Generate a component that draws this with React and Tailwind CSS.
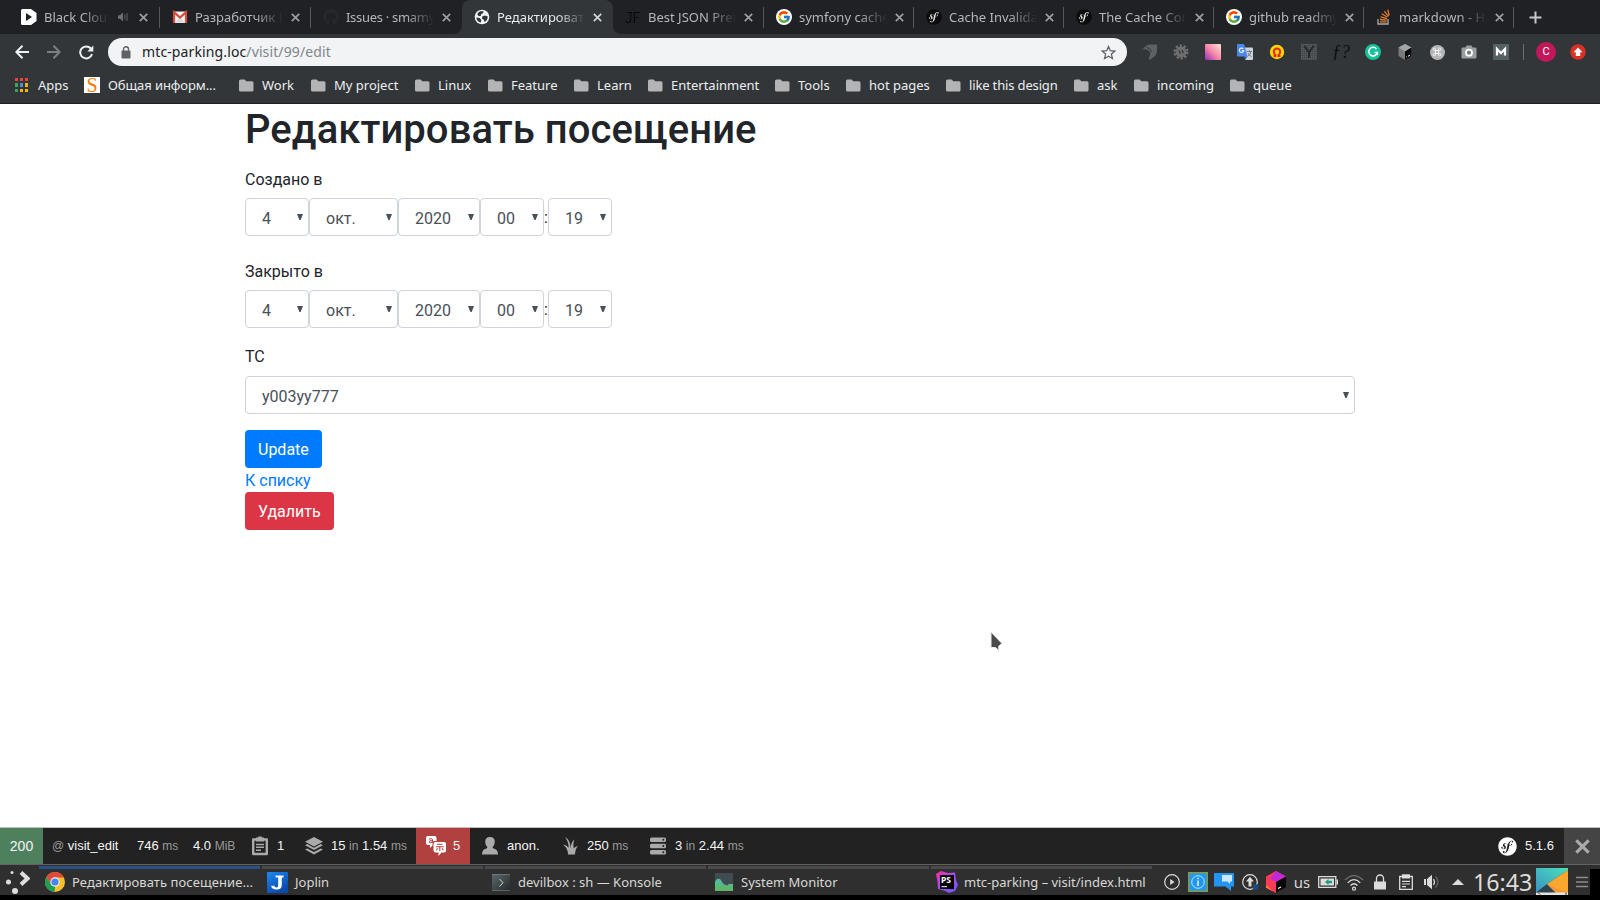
import React from "react";
import { FaGithub, FaSymfony } from "react-icons/fa";
import { FcGoogle } from "react-icons/fc";

/* ---------- shared pieces ---------- */

const Folder = () => (
  <svg width="15" height="13" viewBox="0 0 15 13" className="shrink-0">
    <path d="M1.5 0.5H5.6L7.3 2.3H13Q14.5 2.3 14.5 3.8V11Q14.5 12.5 13 12.5H1.5Q0 12.5 0 11V2Q0 .5 1.5 .5Z" fill="#b3b4b6" />
  </svg>
);

const Cross = ({ size = 9, color = "#9c9ea1", width = 1.7 }) => (
  <svg width={size} height={size} viewBox="0 0 9 9" className="shrink-0">
    <path d="M.8 .8L8.2 8.2M8.2 .8L.8 8.2" stroke={color} strokeWidth={width} fill="none" />
  </svg>
);

const SymfonyBlack = () => (
  <span className="block size-4 rounded-full bg-[radial-gradient(closest-side,#e4e4e4_80%,transparent_82%)]">
    <FaSymfony size={16} color="#0c0c0d" />
  </span>
);

const GoogleRound = () => (
  <span className="flex size-4 items-center justify-center rounded-full bg-white">
    <FcGoogle size={14} />
  </span>
);

const BlackCloud = () => (
  <svg width="16" height="16" viewBox="0 0 16 16">
    <path d="M1.5 0H10L15.5 4V12L10 16H1.5Q0 16 0 14.5V1.5Q0 0 1.5 0Z" fill="#fff" />
    <path d="M5 4L11 8L5 12Z" fill="#202124" />
  </svg>
);

const Gmail = () => (
  <svg width="16" height="16" viewBox="0 0 16 16">
    <path d="M1 2.5H15V14H1Z" fill="#f1f1f1" />
    <path d="M3 13.8L8 8.5L13 13.8Z" fill="#dcdcdc" />
    <path d="M2 14V3.2L8 8.6L14 3.2V14" fill="none" stroke="#d54b3d" strokeWidth="2.2" />
  </svg>
);

const Globe = () => (
  <svg width="16" height="16" viewBox="0 0 16 16">
    <circle cx="8" cy="8" r="7.3" fill="#f1f3f4" />
    <path d="M6.2 2.3L9.6 2.2L9 4.2L7.2 5L7 6.8L4.8 7.3L3.2 5.2Q4 3.2 6.2 2.3Z" fill="#323639" />
    <path d="M2.3 8.4L5.6 9L7.4 11L6.8 13.6Q3 12.8 2.3 8.4Z" fill="#323639" />
    <path d="M8.2 7.6L10.8 6.6L13.8 7.5Q13.6 11.5 10.6 13L9.8 10.8L8 9.8Z" fill="#323639" />
  </svg>
);

const JsonFormatter = () => (
  <svg width="18" height="16" viewBox="0 0 18 16">
    <path d="M2 3H8M6.5 3V11.5Q6.5 14.5 3.5 14.5Q1.5 14.5 1 12M10.5 14.5V3H17M10.5 8.5H15.5" fill="none" stroke="#08080a" strokeWidth="1.2" />
  </svg>
);

const StackOverflow = () => (
  <svg width="14" height="16" viewBox="0 0 14 16">
    <path d="M1 10V15H11V10" fill="none" stroke="#a8a9ab" strokeWidth="1.3" />
    <path d="M3 12.8H9.6M3 10.5L9.6 11.2M3.5 7.8L9.8 9.7M4.8 4.8L10.4 8.2M7.4 2.2L11.4 7.4M10.8 .6L12.2 6.5" stroke="#e07b28" strokeWidth="1.3" fill="none" />
  </svg>
);

const Speaker = () => (
  <svg width="11" height="10" viewBox="0 0 11 10" className="shrink-0">
    <path d="M0 3.2H2L5 .5V9.5L2 6.8H0Z" fill="#6d6f73" />
    <path d="M6.8 2.5V7.5M9 1V9" stroke="#55575b" strokeWidth="1.2" />
  </svg>
);

/* ---------- tab strip ---------- */

const tabs = [
  { icon: <BlackCloud />, title: "Black Cloud", audio: true },
  { icon: <Gmail />, title: "Разработчик P" },
  { icon: <FaGithub size={16} color="#25292e" />, title: "Issues · smamy", tight: true },
  { icon: <Globe />, title: "Редактироват", active: true },
  { icon: <JsonFormatter />, title: "Best JSON Pret" },
  { icon: <GoogleRound />, title: "symfony cache" },
  { icon: <SymfonyBlack />, title: "Cache Invalida" },
  { icon: <SymfonyBlack />, title: "The Cache Con" },
  { icon: <GoogleRound />, title: "github readmy" },
  { icon: <StackOverflow />, title: "markdown - Ho" },
];

function Tab({ tab, wide, beforeActive }) {
  const { icon, title, active, audio, tight } = tab;
  return (
    <div
      className={
        "relative flex h-[34px] shrink-0 items-center pl-[11.5px] " +
        (wide ? "w-[151px] " : "w-[150px] ") +
        (active ? "rounded-t-lg bg-[#323639]" : "")
      }
    >
      {active && (
        <>
          <svg className="absolute bottom-0 -left-2" width="8" height="8">
            <path d="M8 0V8H0A8 8 0 0 0 8 0Z" fill="#323639" />
          </svg>
          <svg className="absolute -right-2 bottom-0" width="8" height="8">
            <path d="M0 0V8H8A8 8 0 0 1 0 0Z" fill="#323639" />
          </svg>
        </>
      )}
      <span className="flex w-4 shrink-0 justify-center">{icon}</span>
      <span
        className={
          "ml-[7.5px] shrink-0 overflow-hidden text-[13px] leading-[18px] whitespace-nowrap " +
          (audio
            ? "w-[65px] mask-[linear-gradient(to_right,black_60%,transparent)] "
            : "w-[88px] mask-[linear-gradient(to_right,black_68%,transparent)] ") +
          (tight ? "tracking-[-0.3px] " : "") +
          (active ? "text-[#e8eaed]" : "text-[#b4b7bb]")
        }
      >
        {title}
      </span>
      {audio && (
        <span className="ml-[9px] flex w-[14px]">
          <Speaker />
        </span>
      )}
      <span className={audio ? "ml-[7px]" : "ml-[7.5px]"}>
        <Cross color={active ? "#d2d4d6" : "#9c9ea1"} />
      </span>
      {!active && !beforeActive && <span className="ml-auto h-[21px] w-px bg-[#55575b]" />}
    </div>
  );
}

function TabStrip() {
  return (
    <div className="flex h-[34px] items-center bg-[#202124] pl-[9px]">
      {tabs.map((t, i) => (
        <Tab key={t.title + i} tab={t} wide={i < 5} beforeActive={tabs[i + 1]?.active} />
      ))}
      <svg width="13" height="13" viewBox="0 0 13 13" className="ml-[15px]">
        <path d="M6.5 .5V12.5M.5 6.5H12.5" stroke="#c6c8ca" strokeWidth="2" />
      </svg>
    </div>
  );
}

/* ---------- address bar ---------- */

const extensions = [
  <svg width="16" height="16" viewBox="0 0 16 16">
    <path d="M0 5.500L2.500 4.500Q5 .5 10 .5H16V7Q15.500 13 8 16Q7.500 14 9 11.500Q9.800 9 8.500 7.500Q7.300 5.800 5 5.500Q3 5 0 5.500Z" fill="#5d6164" />
    <path d="M5.500 3.300Q9.500 4 10.500 8" fill="none" stroke="#323639" strokeWidth="1" />
  </svg>,
  <svg width="16" height="16" viewBox="0 0 16 16">
    <circle cx="8" cy="8" r="6.300" fill="none" stroke="#6f6f6f" strokeWidth="2.600" strokeDasharray="2.200 1.750" />
    <circle cx="8" cy="8" r="5.400" fill="#6f6f6f" />
    <path d="M6 6.500L7.300 9.500M9 6L10.300 9" stroke="#34383b" strokeWidth="1.500" />
  </svg>,
  <svg width="16" height="16" viewBox="0 0 16 16">
    <defs>
      <linearGradient id="pinkGrad" x1="0" y1="1" x2="1" y2="0">
        <stop offset="0" stopColor="#8b2fc0" />
        <stop offset=".45" stopColor="#f482a8" />
        <stop offset="1" stopColor="#fde9cf" />
      </linearGradient>
    </defs>
    <rect width="16" height="16" rx="1" fill="url(#pinkGrad)" />
  </svg>,
  <svg width="16" height="16" viewBox="0 0 16 16">
    <path d="M6 3.500H15Q16 3.500 16 4.500V15Q16 16 15 16H8.500Z" fill="#cfd3d8" />
    <path d="M1 0H7L10.600 12.500H1Q0 12.500 0 11.500V1Q0 0 1 0Z" fill="#4a88ee" />
    <path d="M7.300 12.500H10.600L8.200 15.800Z" fill="#2f62c8" />
    <path d="M6.300 4.800A2.200 2.200 0 1 0 6.800 6.700H4.800" fill="none" stroke="#fff" strokeWidth="1.100" />
    <path d="M9.800 7.500H15M12.300 6.300V7.500M14 7.500Q13 11 10.800 12.400M11 9Q12 11.500 14.500 12.600" fill="none" stroke="#6b7985" strokeWidth="1" />
  </svg>,
  <svg width="16" height="16" viewBox="0 0 16 16">
    <circle cx="8" cy="8" r="7.200" fill="#ffd500" />
    <path d="M4.500 12H6.500V11Q4.800 9.800 4.800 7.700A3.200 3.200 0 0 1 11.200 7.700Q11.200 9.800 9.500 11V12H11.500" fill="none" stroke="#e8261c" strokeWidth="2" />
  </svg>,
  <svg width="16" height="16" viewBox="0 0 16 16">
    <defs>
      <pattern id="hatch" width="2" height="2" patternUnits="userSpaceOnUse">
        <rect width="2" height="2" fill="#484b4d" />
        <rect width="1" height="1" fill="#5d6062" />
      </pattern>
    </defs>
    <rect width="16" height="16" fill="url(#hatch)" />
    <path d="M3.500 2L8 8.500L12.500 2M8 8V14" fill="none" stroke="#25282b" strokeWidth="2" />
  </svg>,
  <span className="font-['Liberation_Serif',serif] text-[18px] leading-4 text-[#0b0c0d] italic">ƒ?</span>,
  <span className="flex size-4 items-center justify-center rounded-full bg-[#15c39a]">
    <svg width="12" height="12" viewBox="0 0 12 12">
      <path d="M9.500 3A4.300 4.300 0 1 0 10.300 6.500H7.500M10.300 6.500V9" fill="none" stroke="#fff" strokeWidth="1.500" />
    </svg>
  </span>,
  <svg width="16" height="16" viewBox="0 0 16 16">
    <path d="M8 0L14.500 3.500V12L8 16L1.500 12V3.500Z" fill="#77797b" />
    <path d="M8 0L14.500 3.500L8 7.500L1.500 3.500Z" fill="#a3a4a5" />
    <path d="M8 7.500L14.500 3.500V12L8 16Z" fill="#090909" />
    <path d="M9.300 13L10 12.600M11 12.300L13 11.100" stroke="#fff" strokeWidth="1" />
  </svg>,
  <span className="flex size-[15px] items-center justify-center rounded-full bg-[#b4b5b6]">
    <svg width="10" height="10" viewBox="0 0 10 10">
      <path d="M3.500 3.500V2.300A1.200 1.200 0 1 0 2.300 3.500H7.700A1.200 1.200 0 1 0 6.500 2.300V7.700A1.200 1.200 0 1 0 7.700 6.500H2.300A1.200 1.200 0 1 0 3.500 7.700Z" fill="none" stroke="#f2f2f2" strokeWidth="1" />
    </svg>
  </span>,
  <svg width="16" height="16" viewBox="0 0 16 16">
    <path d="M.5 4.500Q.5 3.500 1.500 3.500H4.500L5.500 1.500H10.500L11.500 3.500H14.500Q15.500 3.500 15.500 4.500V13.500Q15.500 14.500 14.500 14.500H1.500Q.5 14.500 .5 13.500Z" fill="#9c9d9f" />
    <circle cx="8" cy="8.700" r="3" fill="#77797b" stroke="#fff" strokeWidth="1.800" />
  </svg>,
  <svg width="16" height="16" viewBox="0 0 16 16">
    <rect width="16" height="16" fill="#566163" />
    <path d="M4 11.500V5L8 9L12 5V11.500" fill="none" stroke="#fff" strokeWidth="2.300" />
  </svg>,
];

function AddressBar() {
  return (
    <div className="flex h-9 items-center">
      <svg width="14" height="14" viewBox="0 0 14 14" className="ml-[15px]">
        <path d="M14 7H1.500M7.500 .8L1.300 7L7.500 13.200" fill="none" stroke="#eff0f1" strokeWidth="2" />
      </svg>
      <svg width="14" height="14" viewBox="0 0 14 14" className="ml-[18px]">
        <path d="M0 7H12.500M6.500 .8L12.700 7L6.500 13.200" fill="none" stroke="#7d8083" strokeWidth="2" />
      </svg>
      <svg width="15" height="15" viewBox="0 0 15 15" className="ml-[18px]">
        <path d="M13 9A6 6 0 1 1 11.800 3.500" fill="none" stroke="#eff0f1" strokeWidth="2" />
        <path d="M14.300 .5V6.500H8.300Z" fill="#eff0f1" />
      </svg>
      <div className="ml-[14px] flex h-7 w-[1019px] items-center rounded-full bg-[#f1f3f4] pr-[11px] pl-[13px]">
        <svg width="10" height="13" viewBox="0 0 10 13">
          <rect x=".5" y="4.500" width="9" height="8" rx="1" fill="#5f6368" />
          <path d="M2.500 5V3.200A2.500 2.500 0 0 1 7.500 3.200V5" fill="none" stroke="#5f6368" strokeWidth="1.400" />
        </svg>
        <span className="ml-[11px] text-[14px] leading-5 tracking-[0.12px] text-[#202124]">
          mtc-parking.loc<span className="text-[#80868b]">/visit/99/edit</span>
        </span>
        <svg width="15" height="15" viewBox="0 0 15 15" className="ml-auto">
          <path d="M7.500 1.500L9.300 5.700L13.800 6.100L10.400 9.100L11.400 13.500L7.500 11.200L3.600 13.500L4.600 9.100L1.200 6.100L5.700 5.700Z" fill="none" stroke="#5f6368" strokeWidth="1.300" />
        </svg>
      </div>
      <div className="ml-[6px] flex items-center">
        {extensions.map((e, i) => (
          <span key={i} className="flex w-8 items-center justify-center">
            {e}
          </span>
        ))}
      </div>
      <span className="ml-[6px] h-4 w-px bg-[#6b6e71]" />
      <span className="ml-3 flex size-5 items-center justify-center rounded-full bg-[#c2185b] font-['Roboto',sans-serif] text-[11px] text-white">
        C
      </span>
      <svg width="16" height="16" viewBox="0 0 16 16" className="ml-[14px]">
        <circle cx="8" cy="8" r="7.800" fill="#d93025" />
        <path d="M8 3.500L12.500 8.300H10.200V12H5.800V8.300H3.500Z" fill="#fff" />
      </svg>
    </div>
  );
}

/* ---------- bookmarks ---------- */

const folders = [
  ["Work", "w-[72px]"],
  ["My project", "w-[104px]"],
  ["Linux", "w-[73px]"],
  ["Feature", "w-[86px]"],
  ["Learn", "w-[74px]"],
  ["Entertainment", "w-[127px]"],
  ["Tools", "w-[71px]"],
  ["hot pages", "w-[100px]"],
  ["like this design", "w-[128px] tracking-[-0.15px]"],
  ["ask", "w-[60px]"],
  ["incoming", "w-[96px]"],
  ["queue", "w-[80px]"],
];

const appColors = ["#ee4337", "#ee4337", "#ee4337", "#3aa757", "#4a8af4", "#f4b400", "#3aa757", "#f4b400", "#f4b400"];

function Bookmarks() {
  return (
    <div className="flex h-[33px] items-center pb-[3px] text-[13px] leading-[18px] whitespace-nowrap text-[#eceef0]">
      <div className="ml-[15px] grid grid-cols-3 gap-x-[2px] gap-y-[2px]">
        {appColors.map((c, i) => (
          <span key={i} className="h-[3.500px] w-[3px]" style={{ background: c }} />
        ))}
      </div>
      <span className="ml-[10px] w-[46px]">Apps</span>
      <span className="flex size-4 items-center justify-center bg-white font-['Liberation_Serif',serif] text-[20px] leading-4 text-[#f57c00]">
        S
      </span>
      <span className="ml-2 w-[131px] tracking-[-0.08px]">Общая информ...</span>
      {folders.map(([name, w]) => (
        <div key={name} className={"flex shrink-0 items-center gap-2 " + w}>
          <Folder />
          <span>{name}</span>
        </div>
      ))}
    </div>
  );
}

/* ---------- page ---------- */

function Select({ value, width }) {
  return (
    <div
      className={
        "flex h-[38px] items-center justify-between rounded-[4px] border border-[#ced4da] bg-white pr-[5px] pl-4 text-[#495057] " +
        width
      }
    >
      <span className="pt-[4px]">{value}</span>
      <svg width="6" height="6" viewBox="0 0 6 6" className="mb-px">
        <path d="M0 0H6L3.600 6H2.400Z" fill="#495057" />
      </svg>
    </div>
  );
}

function DateTimeField({ label }) {
  return (
    <fieldset className="mb-4">
      <legend className="pt-2 pb-[6px]">{label}</legend>
      <div className="flex items-center">
        <Select value="4" width="w-16" />
        <Select value="окт." width="w-[89px]" />
        <Select value="2020" width="w-[82px]" />
        <Select value="00" width="w-16" />
        <span className="w-1 pt-[2px]">:</span>
        <Select value="19" width="w-16" />
      </div>
    </fieldset>
  );
}

function VisitForm() {
  return (
    <main className="mx-auto w-[1140px] flex-1 px-[15px] font-['Roboto',sans-serif] text-[16px] leading-6 text-[#212529]">
      <h1 className="mb-[6px] pt-[2px] text-[40px] leading-[48px] font-medium tracking-[0.07px]">Редактировать посещение</h1>
      <DateTimeField label="Создано в" />
      <DateTimeField label="Закрыто в" />
      <label className="mb-[7px] block pt-px">ТС</label>
      <Select value="y003yy777" width="w-full" />
      <button className="mt-4 block h-[38px] rounded-[4px] bg-[#007bff] px-[13px] pt-[2px] text-white">Update</button>
      <a className="block h-6 pt-px text-[#007bff]">К списку</a>
      <button className="block h-[38px] rounded-[4px] bg-[#dc3545] px-[13px] pt-[2px] text-white">Удалить</button>
    </main>
  );
}

/* ---------- debug toolbar ---------- */

const Dim = ({ children }) => <span className="text-[12px] text-[#999]">{children}</span>;

function DebugToolbar() {
  return (
    <div className="flex h-[38px] items-center border-t border-b border-t-[#bdbdbd] border-b-[#636261] bg-[#222] font-['Liberation_Sans',sans-serif] text-[13px] leading-4 whitespace-nowrap text-[#f5f5f5]">
      <span className="flex h-full w-[43px] items-center justify-center bg-[#4f805d] text-[14px]">200</span>
      <span className="ml-[9px] w-[85px]">
        <Dim>@</Dim> visit_edit
      </span>
      <span className="w-[56px]">
        746 <Dim>ms</Dim>
      </span>
      <span className="w-[58px]">
        4.0 <Dim>MiB</Dim>
      </span>
      <svg width="18" height="20" viewBox="0 0 18 20">
        <path d="M2.200 3.500H15.800V18H2.200Z" fill="none" stroke="#aaa" strokeWidth="2.400" strokeLinejoin="round" />
        <path d="M5 1.500H7L7.500 .5H10.500L11 1.500H13V5.500H5Z" fill="#aaa" />
        <path d="M5 8.500H13M5 11.300H13M5 14.200H10" stroke="#aaa" strokeWidth="1.400" />
      </svg>
      <span className="ml-2 w-[28px]">1</span>
      <svg width="18" height="18" viewBox="0 0 18 18">
        <path d="M9 0L18 4.700L9 9.400L0 4.700Z" fill="#aaa" />
        <path d="M0 8.200L2.200 7.100L9 10.700L15.800 7.100L18 8.200L9 13Z" fill="#aaa" />
        <path d="M0 12.500L2.200 11.400L9 15L15.800 11.400L18 12.500L9 17.500Z" fill="#aaa" />
      </svg>
      <span className="ml-[8px] w-[85px]">
        15 <Dim>in</Dim> 1.54 <Dim>ms</Dim>
      </span>
      <span className="flex h-full w-[54px] items-center bg-[#b0413e] pl-[10px]">
        <svg width="20" height="20" viewBox="0 0 20 20">
          <path d="M2 0H8.500Q10.500 0 10.500 2V5H8Q6.500 5 6.500 6.500V9.500L4 12V9H2Q0 9 0 7V2Q0 0 2 0Z" fill="#fff" />
          <path d="M3 3.300Q5.500 1.700 6.500 3.500V6.500M6.500 4.700Q3 4.300 3 6Q3.800 7.500 6.300 6" fill="none" stroke="#b0413e" strokeWidth="1" />
          <path d="M9.500 6H18Q20 6 20 8V14.500Q20 16.500 18 16.500H15.500L12.500 20V16.500H9.500Q7.500 16.500 7.500 14.500V8Q7.500 6 9.500 6Z" fill="#fff" />
          <path d="M11 8.300H16.500M9.800 10.700H17.800M13.800 10.700V15M11.500 12.300L10.300 14.300M16 12.300L17.300 14.300" fill="none" stroke="#b0413e" strokeWidth="1.100" />
        </svg>
        <span className="ml-[7px]">5</span>
      </span>
      <svg width="16" height="18" viewBox="0 0 16 18" className="ml-[12px]">
        <path d="M8 0Q12.800 0 12.800 5Q12.800 8 10.500 10.200Q11 11.500 13.500 12.200Q15.800 13 16 17.500H0Q.2 13 2.500 12.200Q5 11.500 5.500 10.200Q3.200 8 3.200 5Q3.200 0 8 0Z" fill="#aaa" />
      </svg>
      <span className="ml-[9px] w-[56px]">anon.</span>
      <svg width="15" height="18" viewBox="0 0 15 18">
        <path d="M2 0Q7.500 3 7.700 11Q8 5.500 11 2.500Q10 8 10.700 11.500Q11.500 9.500 15 9Q12.300 11.500 12 17.500H5Q5 11.500 0 7.500Q3.500 7.800 5.700 10.700Q5.500 4.500 2 0Z" fill="#aaa" />
      </svg>
      <span className="ml-[9px] w-[62px]">
        250 <Dim>ms</Dim>
      </span>
      <svg width="18" height="18" viewBox="0 0 18 18">
        <path d="M2.500 .5H15.500Q17 .5 17 2V3.500Q17 5 15.500 5H2.500Q1 5 1 3.500V2Q1 .5 2.500 .5ZM2.500 6.700H15.500Q17 6.700 17 8.200V9.700Q17 11.200 15.500 11.200H2.500Q1 11.200 1 9.700V8.200Q1 6.700 2.500 6.700ZM2.500 13H15.500Q17 13 17 14.500V16Q17 17.500 15.500 17.500H2.500Q1 17.500 1 16V14.500Q1 13 2.500 13Z" fill="#aaa" />
        <circle cx="14.300" cy="2.800" r="1" fill="#222" />
        <circle cx="14.300" cy="9" r="1" fill="#222" />
        <circle cx="14.300" cy="15.200" r="1" fill="#222" />
      </svg>
      <span className="ml-[8px]">
        3 <Dim>in</Dim> 2.44 <Dim>ms</Dim>
      </span>
      <span className="mr-[8px] ml-auto">
        <FaSymfony size={19} color="#fff" />
      </span>
      <span className="w-[39px]">5.1.6</span>
      <span className="flex h-full w-9 items-center justify-center bg-[#444]">
        <Cross size={15} color="#aaa" width={1.9} />
      </span>
    </div>
  );
}

/* ---------- desktop panel ---------- */

const Chrome = () => (
  <svg width="20" height="20" viewBox="0 0 20 20">
    <circle cx="10" cy="10" r="10" fill="#fbc02d" />
    <path d="M10 5.500H18.900A10 10 0 0 0 1.340 5L5.800 12Z" fill="#dd4b3e" />
    <path d="M1.340 5L6.100 12.250Q7.500 14.500 10.300 14.500L9.500 20A10 10 0 0 1 1.340 5Z" fill="#1e9d58" />
    <circle cx="10" cy="10" r="4.700" fill="#f1f1f1" />
    <circle cx="10" cy="10" r="3.600" fill="#4285f4" />
  </svg>
);

const Joplin = () => (
  <svg width="21" height="21" viewBox="0 0 21 21">
    <defs>
      <linearGradient id="jop" x1="0" y1="0" x2=".6" y2="1">
        <stop offset="0" stopColor="#1b8af0" />
        <stop offset="1" stopColor="#0b48ad" />
      </linearGradient>
    </defs>
    <rect width="21" height="21" rx="1" fill="url(#jop)" />
    <path d="M8.500 3.500H16.500V5.500H14.800V13Q14.800 17.500 9.500 17.500Q4.500 17.500 4.200 13.700H7.200Q7.800 15.500 9.500 15.500Q11.200 15.500 11.200 13V5.500H8.500Z" fill="#fff" />
  </svg>
);

const KonsoleIcon = () => (
  <svg width="18" height="17" viewBox="0 0 18 17">
    <defs>
      <linearGradient id="kon" x1="0" y1="0" x2="1" y2="1">
        <stop offset="0" stopColor="#5a6a6b" />
        <stop offset="1" stopColor="#26292c" />
      </linearGradient>
    </defs>
    <rect width="18" height="17" fill="url(#kon)" />
    <path d="M0 .5H18M0 16.500H18" stroke="#7b8587" strokeWidth="1" opacity=".6" />
    <path d="M7.500 5L11 8.700L7.500 12.500" fill="none" stroke="#d4d8d8" strokeWidth="1" />
  </svg>
);

const MonitorIcon = () => (
  <svg width="18" height="18" viewBox="0 0 18 18">
    <defs>
      <linearGradient id="mon" x1="0" y1="0" x2="0" y2="1">
        <stop offset="0" stopColor="#4fbfa6" />
        <stop offset="1" stopColor="#62b45e" />
      </linearGradient>
    </defs>
    <rect width="18" height="18" fill="#414b52" />
    <path d="M0 8.500L2 6H5L8.500 11L12 12.500L14 11H18V18H0Z" fill="url(#mon)" />
  </svg>
);

const PhpStorm = () => (
  <svg width="22" height="22" viewBox="0 0 22 22">
    <defs>
      <linearGradient id="ps" x1="0" y1="0" x2="1" y2="1">
        <stop offset="0" stopColor="#ff2d90" />
        <stop offset=".45" stopColor="#a64bf4" />
        <stop offset="1" stopColor="#6b57ff" />
      </linearGradient>
    </defs>
    <path d="M0 3L5 0L12 2L19 1.500L20 9L22 14L19 20L13 22L8 19.500L2 18L1.500 11Z" fill="url(#ps)" />
    <rect x="4" y="4" width="14" height="14" fill="#050505" />
    <path d="M5.500 15.700H11" stroke="#fff" strokeWidth="1" />
    <text x="5" y="12" fontSize="8.500" fontWeight="700" fontFamily="Noto Sans" fill="#fff">PS</text>
  </svg>
);

const tasks = [
  { icon: <Chrome />, name: "Редактировать посещение...", active: true, pad: "pl-[6px] gap-[7px] tracking-[0.08px]" },
  { icon: <Joplin />, name: "Joplin", pad: "pl-[5px] gap-[7px]" },
  { icon: <KonsoleIcon />, name: "devilbox : sh — Konsole", pad: "pl-[7px] gap-[8px]" },
  { icon: <MonitorIcon />, name: "System Monitor", pad: "pl-[7px] gap-[8px]" },
  { icon: <PhpStorm />, name: "mtc-parking – visit/index.html", pad: "pl-[5px] gap-[6px]" },
];

const tray = [
  <svg width="16" height="16" viewBox="0 0 16 16">
    <circle cx="8" cy="8" r="7.300" fill="none" stroke="#dcdcda" strokeWidth="1.200" />
    <path d="M6.200 5L10.500 8L6.200 11Z" fill="#dcdcda" />
  </svg>,
  <svg width="20" height="20" viewBox="0 0 20 20">
    <rect x=".7" y=".7" width="18.600" height="18.600" fill="#2196f3" stroke="#7d9b55" strokeWidth="1.800" />
    <circle cx="10" cy="10" r="6.300" fill="none" stroke="#bfe6ff" strokeWidth="1" />
    <path d="M10 8.500V14M10 5.700V7.200" stroke="#fff" strokeWidth="1.300" />
  </svg>,
  <svg width="20" height="20" viewBox="0 0 20 20">
    <path d="M0 1H20V14.500H17V19L11.500 14.500H0Z" fill="#2494f2" />
    <path d="M8 3H18V9.500H16V12L13.500 9.500H8Z" fill="#cbe7ff" />
  </svg>,
  <svg width="17" height="16" viewBox="0 0 17 16">
    <circle cx="8" cy="8" r="7.300" fill="none" stroke="#dcdcda" strokeWidth="1.200" />
    <path d="M8 2.800L12 7.500H9.500V12.500H6.500V7.500H4Z" fill="#dcdcda" />
    <circle cx="13.500" cy="13" r="3" fill="#1f4a80" />
  </svg>,
  <svg width="20" height="22" viewBox="0 0 20 22">
    <path d="M0 5.500L10 0L20 5.500V16.500L10 22L0 16.500Z" fill="#ff3a58" />
    <path d="M10 0L20 5.500L10 11L4 7.500Z" fill="#c128d8" />
    <path d="M0 14L7 20.500L0 16.500Z" fill="#ff8a1f" />
    <path d="M10 11L20 5.500V16.500L10 22Z" fill="#080808" />
    <path d="M12 17.500L15 16" stroke="#fff" strokeWidth="1.200" />
  </svg>,
  <span className="text-[15px] leading-5 text-[#d8d8d6]">us</span>,
  <svg width="20" height="12" viewBox="0 0 20 12">
    <path d="M.7 .7H17.800V11.300H.7Z" fill="none" stroke="#dcdcda" strokeWidth="1.300" />
    <path d="M18.500 3.500H20V8.500H18.500Z" fill="#dcdcda" />
    <rect x="2.500" y="2.500" width="13.500" height="7" fill="#dcdcda" />
    <path d="M7 6L10.500 3V4.800H14V7.200H10.500V9Z" fill="#16a085" />
  </svg>,
  <svg width="20" height="17" viewBox="0 0 20 17">
    <path d="M1 6Q10 -3 19 6" fill="none" stroke="#73736f" strokeWidth="1.200" />
    <path d="M3.700 8.800Q10 2.500 16.300 8.800M6.500 11.500Q10 8 13.500 11.500" fill="none" stroke="#dcdcda" strokeWidth="1.200" />
    <circle cx="10" cy="14.700" r="1.500" fill="none" stroke="#dcdcda" strokeWidth="1.200" />
  </svg>,
  <svg width="12" height="16" viewBox="0 0 12 16">
    <rect y="7.500" width="12" height="8" fill="#dcdcda" />
    <path d="M2.500 8V4.500A3.500 3.500 0 0 1 9.500 4.500V8" fill="none" stroke="#dcdcda" strokeWidth="1.300" />
  </svg>,
  <svg width="14" height="16" viewBox="0 0 14 16">
    <path d="M.7 2.500H13.300V15.300H.7Z" fill="none" stroke="#dcdcda" strokeWidth="1.300" />
    <path d="M3 .3H11V4.500H3Z" fill="#dcdcda" />
    <path d="M3 7.300H11M3 10H11M3 12.700H7" stroke="#dcdcda" strokeWidth="1.200" />
  </svg>,
  <svg width="16" height="16" viewBox="0 0 16 16">
    <path d="M0 5H2V11H0ZM3 5L8 .8V15.200L3 11Z" fill="#dcdcda" />
    <path d="M9.500 5Q11.500 8 9.500 11" fill="none" stroke="#dcdcda" strokeWidth="1.200" />
    <path d="M11.500 2.500Q16.500 8 11.500 13.500" fill="none" stroke="#666" strokeWidth="1.200" />
  </svg>,
  <svg width="12" height="6" viewBox="0 0 12 6">
    <path d="M0 6L6 0L12 6Z" fill="#dcdcda" />
  </svg>,
];

function Panel() {
  return (
    <div className="flex h-[35px] bg-black">
      <div className="flex h-[30px] w-[1590px] bg-[#2f2f2f]">
        <span className="flex w-[39px] items-center pt-1 pl-[6px]">
          <svg width="24" height="24" viewBox="0 0 24 24">
            <circle cx="6" cy="2.500" r="1.500" fill="#dededc" />
            <circle cx="2.500" cy="12" r="2.500" fill="#dededc" />
            <circle cx="9" cy="21" r="3" fill="#dededc" />
            <path d="M15 2.500L21.500 8.500L15 14.500" fill="none" stroke="#dededc" strokeWidth="4" />
          </svg>
        </span>
        <div className="flex gap-[2px]">
          {tasks.map((t) => (
            <div key={t.name} className="flex w-[221px] flex-col pt-px">
              <span className={"h-[3px] " + (t.active ? "bg-[#2b5083]" : "bg-[#4a4a4a]")} />
              <div className={"flex h-[26px] items-center text-[13px] whitespace-nowrap text-[#d8d8d6] " + t.pad}>
                {t.icon}
                <span className="leading-5">{t.name}</span>
              </div>
            </div>
          ))}
        </div>
        <div className="ml-[7px] flex items-center pt-1">
          {tray.map((icon, i) => (
            <span key={i} className="flex w-[26px] items-center justify-center">
              {icon}
            </span>
          ))}
        </div>
        <span className="ml-[2px] w-[63px] pt-1 text-[23.200px] leading-[26px] text-[#dcdcda]">16:43</span>
        <svg width="32" height="27" viewBox="0 0 32 27" className="mt-[3px]">
          <defs>
            <linearGradient id="teal" x1="0" y1="1" x2="1" y2="0">
              <stop offset="0" stopColor="#3a93c4" />
              <stop offset="1" stopColor="#49e0bd" />
            </linearGradient>
          </defs>
          <rect width="32" height="27" fill="#2c4450" />
          <path d="M0 0H32V2L11 16L0 24.500Z" fill="url(#teal)" />
          <path d="M32 2V27H22L11 16Z" fill="#fba62f" />
          <path d="M11 16L30 24.500H20Z" fill="#f3963c" />
          <path d="M0 24.500H32V27H0Z" fill="#e4e4df" />
          <path d="M2 24.500L4 26.500M30 24.500V27" stroke="#333" strokeWidth="1" />
        </svg>
        <svg width="12" height="12" viewBox="0 0 12 12" className="mt-[11px] ml-[8px] shrink-0">
          <path d="M0 1.500H12M0 6H12M0 10.500H12" stroke="#8d8d8b" strokeWidth="1.600" />
        </svg>
      </div>
      <span className="h-1 flex-1 bg-[#2f2f2f]" />
    </div>
  );
}

/* ---------- screen ---------- */

export default function App() {
  return (
    <div className="relative flex h-[900px] w-[1600px] flex-col overflow-hidden bg-white font-['Noto_Sans',sans-serif]">
      <TabStrip />
      <div className="h-[70px] border-b border-[#221f22] bg-[#323639]">
        <AddressBar />
        <Bookmarks />
      </div>
      <VisitForm />
      <DebugToolbar />
      <Panel />
      <svg className="absolute top-[630px] left-[989px]" width="16" height="24" viewBox="0 0 16 24">
        <path d="M2 2L13 13.500L9.800 16L9.800 20.500L6.500 17.500H2Z" fill="#4a4a4a" stroke="#ececec" strokeWidth="1" />
      </svg>
    </div>
  );
}
